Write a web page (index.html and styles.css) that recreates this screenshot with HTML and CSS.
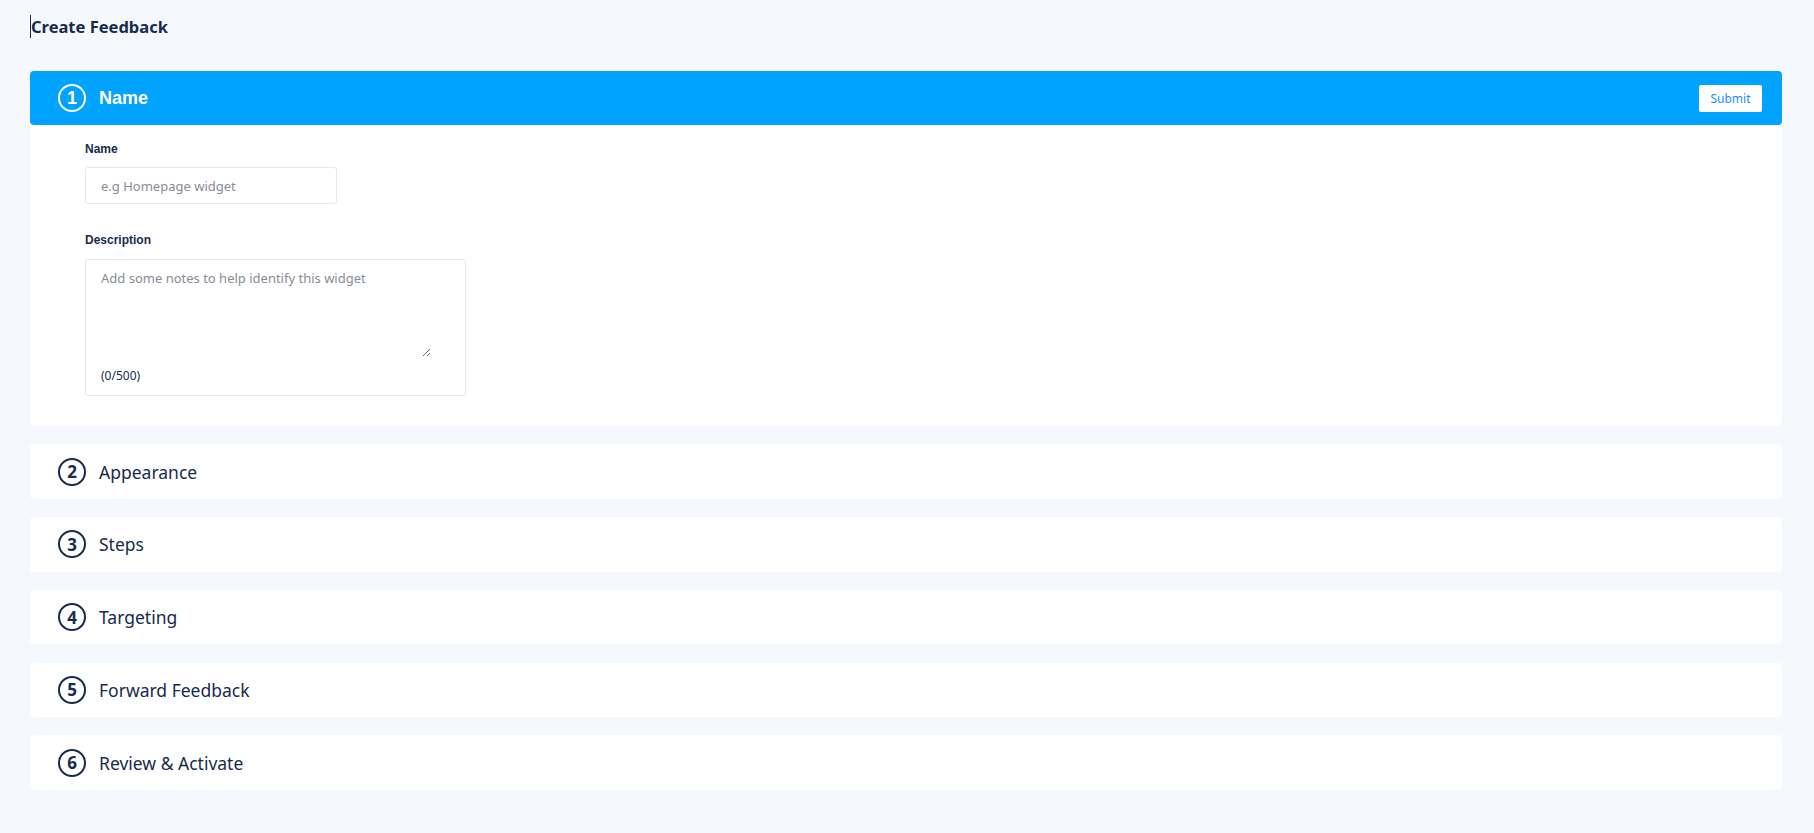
FILE: index.html
```html
<!DOCTYPE html>
<html lang="en">
<head>
<meta charset="utf-8">
<title>Create Feedback</title>
<link rel="stylesheet" href="styles.css">
</head>
<body>
<div class="page">
  <h1 class="page-title">Create Feedback</h1>
  <div class="sections">
    <section class="card card-active">
      <div class="card-head">
        <span class="step-num">1</span>
        <span class="card-title">Name</span>
        <button class="submit-btn" type="button">Submit</button>
      </div>
      <div class="card-body">
        <div class="field">
          <label class="field-label">Name</label>
          <input class="text-input" type="text" placeholder="e.g Homepage widget">
        </div>
        <div class="field field-desc">
          <label class="field-label">Description</label>
          <div class="textarea-wrap">
            <textarea class="text-area" placeholder="Add some notes to help identify this widget"></textarea>
            <div class="counter">(0/500)</div>
          </div>
        </div>
      </div>
    </section>
    <section class="card">
      <div class="card-head"><span class="step-num">2</span><span class="card-title">Appearance</span></div>
    </section>
    <section class="card">
      <div class="card-head"><span class="step-num">3</span><span class="card-title">Steps</span></div>
    </section>
    <section class="card">
      <div class="card-head"><span class="step-num">4</span><span class="card-title">Targeting</span></div>
    </section>
    <section class="card">
      <div class="card-head"><span class="step-num">5</span><span class="card-title">Forward Feedback</span></div>
    </section>
    <section class="card">
      <div class="card-head"><span class="step-num">6</span><span class="card-title">Review &amp; Activate</span></div>
    </section>
  </div>
</div>
</body>
</html>
```
FILE: styles.css
```css
html, body {
  margin: 0;
  padding: 0;
  background: #f5f9fd;
}
body {
  font-family: "Noto Sans", "Open Sans", sans-serif;
  color: #172b4d;
}
.page {
  padding: 15px 32px 40px 30px;
}
.page-title {
  margin: 0 0 33px 0;
  font-size: 16.5px;
  font-weight: 700;
  line-height: 23px;
  color: #172b4d;
  border-left: 1px solid #172b4d;
  display: inline-block;
}
.sections {
  display: flex;
  flex-direction: column;
  gap: 18.25px;
}
.card {
  background: #ffffff;
  border-radius: 4px;
}
.card-head {
  height: 54.5px;
  display: flex;
  align-items: center;
  gap: 13px;
  padding: 0 20px 0 28px;
  border-radius: 4px;
}
.card-active .card-head {
  height: 54px;
  background: #00a3ff;
}
.step-num {
  box-sizing: border-box;
  width: 28px;
  height: 28px;
  border: 2px solid #172b4d;
  border-radius: 50%;
  display: flex;
  align-items: center;
  justify-content: center;
  font-size: 17px;
  font-weight: 700;
  line-height: 1;
  color: #172b4d;
}
.card-title {
  font-size: 17.5px;
  font-weight: 400;
  color: #172b4d;
}
.card-active .step-num {
  border-color: #ffffff;
  color: #ffffff;
  font-family: "Liberation Sans", Arial, sans-serif;
  font-size: 18px;
}
.card-active .card-title {
  font-family: "Liberation Sans", Arial, sans-serif;
  font-weight: 700;
  font-size: 18px;
  color: #ffffff;
}
.submit-btn {
  margin-left: auto;
  width: 63px;
  height: 27px;
  background: #ffffff;
  border: 0;
  border-radius: 2px;
  font-family: "Noto Sans", sans-serif;
  font-size: 12px;
  color: #1a8cff;
  padding: 0;
  cursor: pointer;
}
.card-body {
  padding: 17px 0 30px 55px;
}
.field-label {
  display: block;
  font-family: "Liberation Sans", Arial, sans-serif;
  font-size: 12px;
  font-weight: 700;
  line-height: 14px;
  color: #172b4d;
  margin-bottom: 11px;
}
.field-desc {
  margin-top: 29px;
}
.field-desc .field-label {
  margin-bottom: 12px;
}
.text-input {
  box-sizing: border-box;
  width: 252px;
  height: 37px;
  border: 1px solid #e4e8ed;
  border-radius: 3px;
  padding: 0 15px;
  font-family: "Noto Sans", sans-serif;
  font-size: 13px;
  color: #172b4d;
  outline: none;
  display: block;
}
.text-input::placeholder,
.text-area::placeholder {
  color: #878c96;
}
.textarea-wrap {
  box-sizing: border-box;
  width: 381px;
  border: 1px solid #e4e8ed;
  border-radius: 3px;
  padding: 9px 15px 10px 15px;
}
.text-area {
  display: block;
  box-sizing: border-box;
  width: 330px;
  height: 88px;
  border: 0;
  padding: 0;
  margin: 0;
  outline: none;
  resize: vertical;
  font-family: "Noto Sans", sans-serif;
  font-size: 13px;
  line-height: 18px;
  color: #172b4d;
}
.counter {
  margin-top: 10px;
  font-size: 12px;
  line-height: 18px;
  color: #172b4d;
}
```
